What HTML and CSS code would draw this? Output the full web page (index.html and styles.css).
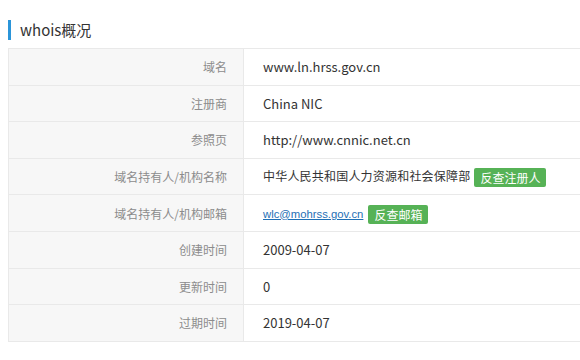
FILE: index.html
```html
<!DOCTYPE html>
<html lang="zh-CN">

<head>
   <meta charset="UTF-8">
   <meta name="viewport" content="width=device-width, initial-scale=1.0">
   <title>whois概况</title>
   <link rel="stylesheet" href="styles.css">
</head>

<body>
   <div class="panel">
      <h2 class="panel-title">whois概况</h2>

      <table class="whois-table">
         <tr>
            <td class="label">域名</td>
            <td class="value">www.ln.hrss.gov.cn</td>
         </tr>
         <tr>
            <td class="label">注册商</td>
            <td class="value">China NIC</td>
         </tr>
         <tr>
            <td class="label">参照页</td>
            <td class="value">http://www.cnnic.net.cn</td>
         </tr>
         <tr>
            <td class="label">域名持有人/机构名称</td>
            <td class="value"><span class="org-name">中华人民共和国人力资源和社会保障部</span><a class="btn-lookup" href="#">反查注册人</a></td>
         </tr>
         <tr>
            <td class="label">域名持有人/机构邮箱</td>
            <td class="value"><a class="mail-link" href="#">wlc@mohrss.gov.cn</a><a class="btn-lookup btn-mail" href="#">反查邮箱</a></td>
         </tr>
         <tr>
            <td class="label">创建时间</td>
            <td class="value">2009-04-07</td>
         </tr>
         <tr>
            <td class="label">更新时间</td>
            <td class="value">0</td>
         </tr>
         <tr>
            <td class="label">过期时间</td>
            <td class="value">2019-04-07</td>
         </tr>
      </table>
   </div>
</body>

</html>
```

FILE: styles.css
```css
body {
   margin: 0;
   padding: 0 0 0 8px;
   background-color: #fff;
   font-family: "Noto Sans CJK SC", "Noto Sans", sans-serif;
   color: #333;
}

.panel {
   width: 572px;
}

/* Section heading with the blue marker on the left */
.panel-title {
   margin: 20px 0 8px 0;
   padding-left: 9px;
   border-left: 3px solid #2b95d9;
   height: 20px;
   line-height: 20px;
   font-size: 15px;
   font-weight: normal;
   color: #333;
}

.whois-table {
   width: 100%;
   border-collapse: collapse;
   border: 1px solid #e6e6e6;
   border-right: none;
}

.whois-table td {
   height: 35.6px;
   padding: 0;
   border: 1px solid #e9e9e9;
   font-size: 12px;
}

.whois-table td.label {
   width: 218px;
   padding-right: 16px;
   text-align: right;
   background-color: #f7f7f7;
   color: #8c8c8c;
}

.whois-table td.value {
   padding-left: 19px;
   border-right: none;
   color: #333;
   font-size: 13px;
}

.org-name {
   font-size: 12px;
   letter-spacing: 0.2px;
}

.mail-link {
   font-family: "Liberation Sans", Arial, sans-serif;
   font-size: 11.3px;
   color: #1f6fb5;
   text-decoration: underline;
}

.btn-lookup {
   display: inline-block;
   margin-left: 4px;
   padding: 0 6px;
   height: 19px;
   line-height: 19px;
   border-radius: 2px;
   background-color: #56b256;
   color: #fff;
   font-size: 12px;
   text-decoration: none;
   vertical-align: middle;
}

.btn-mail {
   margin-left: 5px;
}
```
